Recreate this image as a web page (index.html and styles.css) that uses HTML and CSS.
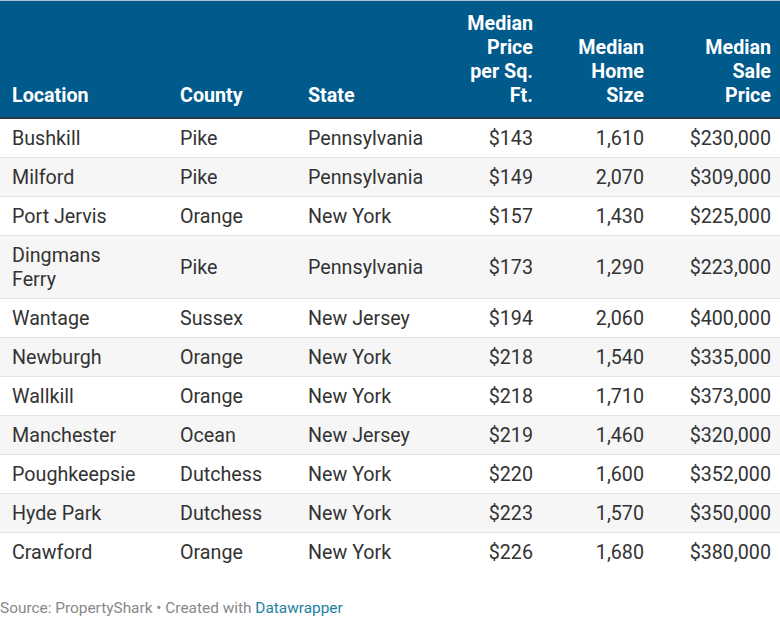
FILE: index.html
```html
<!DOCTYPE html>
<html>
<head>
<meta charset="utf-8">
<link rel="stylesheet" href="styles.css">
</head>
<body>
<table class="data">
  <colgroup>
    <col class="c1"><col class="c2"><col class="c3"><col class="c4"><col class="c5"><col class="c6">
  </colgroup>
  <thead>
    <tr>
      <th class="first">Location</th>
      <th>County</th>
      <th>State</th>
      <th class="num">Median<br>Price<br>per Sq.<br>Ft.</th>
      <th class="num">Median<br>Home<br>Size</th>
      <th class="num last">Median<br>Sale<br>Price</th>
    </tr>
  </thead>
  <tbody>
    <tr><td class="first">Bushkill</td><td>Pike</td><td>Pennsylvania</td><td class="num">$143</td><td class="num">1,610</td><td class="num last">$230,000</td></tr>
    <tr><td class="first">Milford</td><td>Pike</td><td>Pennsylvania</td><td class="num">$149</td><td class="num">2,070</td><td class="num last">$309,000</td></tr>
    <tr><td class="first">Port Jervis</td><td>Orange</td><td>New York</td><td class="num">$157</td><td class="num">1,430</td><td class="num last">$225,000</td></tr>
    <tr><td class="first">Dingmans<br>Ferry</td><td>Pike</td><td>Pennsylvania</td><td class="num">$173</td><td class="num">1,290</td><td class="num last">$223,000</td></tr>
    <tr><td class="first">Wantage</td><td>Sussex</td><td>New Jersey</td><td class="num">$194</td><td class="num">2,060</td><td class="num last">$400,000</td></tr>
    <tr><td class="first">Newburgh</td><td>Orange</td><td>New York</td><td class="num">$218</td><td class="num">1,540</td><td class="num last">$335,000</td></tr>
    <tr><td class="first">Wallkill</td><td>Orange</td><td>New York</td><td class="num">$218</td><td class="num">1,710</td><td class="num last">$373,000</td></tr>
    <tr><td class="first">Manchester</td><td>Ocean</td><td>New Jersey</td><td class="num">$219</td><td class="num">1,460</td><td class="num last">$320,000</td></tr>
    <tr><td class="first">Poughkeepsie</td><td>Dutchess</td><td>New York</td><td class="num">$220</td><td class="num">1,600</td><td class="num last">$352,000</td></tr>
    <tr><td class="first">Hyde Park</td><td>Dutchess</td><td>New York</td><td class="num">$223</td><td class="num">1,570</td><td class="num last">$350,000</td></tr>
    <tr><td class="first">Crawford</td><td>Orange</td><td>New York</td><td class="num">$226</td><td class="num">1,680</td><td class="num last">$380,000</td></tr>
  </tbody>
</table>
<p class="footer">Source: PropertyShark • Created with <span class="link">Datawrapper</span></p>
</body>
</html>
```

FILE: styles.css
```css
html, body {
  margin: 0;
  padding: 0;
  background: #ffffff;
}
body {
  font-family: Roboto, "Liberation Sans", sans-serif;
  width: 780px;
}
.data {
  width: 780px;
  border-collapse: collapse;
  table-layout: fixed;
  font-size: 19.7px;
  line-height: 24px;
  color: #333333;
}
.c1 { width: 170px; }
.c2 { width: 128px; }
.c3 { width: 142px; }
.c4 { width: 103px; }
.c5 { width: 111px; }
.c6 { width: 126px; }
.data thead tr {
  background: #005a8c;
  border-top: 1px solid #a9c4d4;
  border-bottom: 2px solid #2b3a44;
}
.data th {
  color: #ffffff;
  font-weight: 700;
  text-align: left;
  vertical-align: bottom;
  padding: 11px 10px 9px 10px;
}
.data td {
  padding: 8px 10px 6px 10px;
  vertical-align: middle;
  text-align: left;
  white-space: nowrap;
}
.data tbody tr {
  border-bottom: 1px solid #e4e4e4;
}
.data tbody tr:nth-child(even) {
  background: #f6f6f6;
}
.data tbody tr:last-child {
  border-bottom: none;
}
.data .first {
  padding-left: 12px;
}
.data .num {
  text-align: right;
}
.data .last {
  padding-right: 9px;
}
.footer {
  margin: 28px 0 0 0;
  font-size: 15.4px;
  line-height: 18px;
  color: #888888;
}
.link {
  color: #1d81a2;
}
```
